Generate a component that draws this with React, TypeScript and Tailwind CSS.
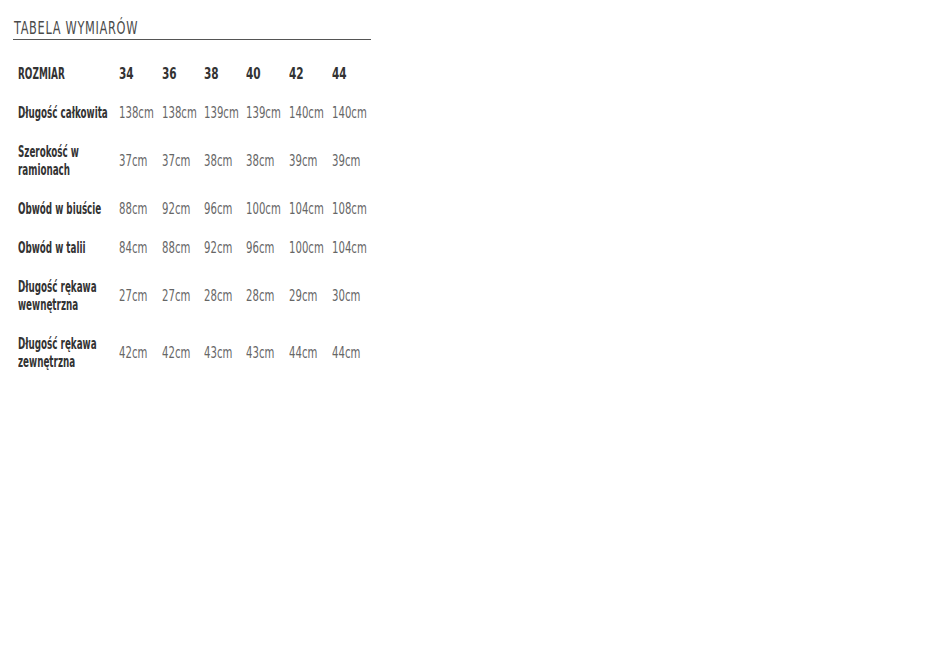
import React from "react";

const sizes = ["34", "36", "38", "40", "42", "44"];

const rows: { label: string[]; values: string[] }[] = [
  { label: ["Długość całkowita"], values: ["138cm", "138cm", "139cm", "139cm", "140cm", "140cm"] },
  { label: ["Szerokość w", "ramionach"], values: ["37cm", "37cm", "38cm", "38cm", "39cm", "39cm"] },
  { label: ["Obwód w biuście"], values: ["88cm", "92cm", "96cm", "100cm", "104cm", "108cm"] },
  { label: ["Obwód w talii"], values: ["84cm", "88cm", "92cm", "96cm", "100cm", "104cm"] },
  { label: ["Długość rękawa", "wewnętrzna"], values: ["27cm", "27cm", "28cm", "28cm", "29cm", "30cm"] },
  { label: ["Długość rękawa", "zewnętrzna"], values: ["42cm", "42cm", "43cm", "43cm", "44cm", "44cm"] },
];

// wąska czcionka: DejaVu Condensed ściśnięta w poziomie
const Narrow: React.FC<{ className: string; children: React.ReactNode }> = ({ className, children }) => (
  <span className={"inline-block origin-left whitespace-nowrap " + className}>{children}</span>
);

const App: React.FC = () => {
  return (
    <div
      className="min-h-screen bg-white pl-[13px] pt-[17px]"
      style={{ fontFamily: '"DejaVu Sans Condensed", "DejaVu Sans", sans-serif' }}
    >
      <div className="w-[358px]">
        <h2 className="border-b-[1.5px] border-[#555] pb-[1px] pl-px text-[18px] leading-[21px] font-normal tracking-[1px] text-[#4a4a4a]">
          <Narrow className="scale-x-[0.7]">TABELA WYMIARÓW</Narrow>
        </h2>

        {/* tabela */}
        <table className="mt-[14px] w-[358px] table-fixed border-collapse text-[15px] leading-[18px]">
          <colgroup>
            <col className="w-[102px]" />
            <col className="w-[43px]" />
            <col className="w-[42px]" />
            <col className="w-[42px]" />
            <col className="w-[43px]" />
            <col className="w-[43px]" />
            <col className="w-[43px]" />
          </colgroup>
          <thead>
            <tr>
              <th className="pl-[5px] pt-[11px] pb-[10px] text-left font-bold text-[#333]">
                <Narrow className="scale-x-[0.66]">ROZMIAR</Narrow>
              </th>
              {sizes.map((s) => (
                <th key={s} className="pl-[4px] pt-[11px] pb-[10px] text-left font-bold text-[#333]">
                  <Narrow className="scale-x-[0.78]">{s}</Narrow>
                </th>
              ))}
            </tr>
          </thead>
          <tbody>
            {rows.map((r, i) => (
              <tr key={i}>
                <td className="pl-[5px] pt-[11px] pb-[10px] align-middle font-bold text-[#333]">
                  {r.label.map((l, k) => (
                    <div key={k}>
                      <Narrow className="scale-x-[0.65]">{l}</Narrow>
                    </div>
                  ))}
                </td>
                {r.values.map((v, j) => (
                  <td key={j} className="pl-[4px] pt-[11px] pb-[10px] align-middle text-[#666]">
                    <Narrow className="scale-x-[0.75]">{v}</Narrow>
                  </td>
                ))}
              </tr>
            ))}
          </tbody>
        </table>
      </div>
    </div>
  );
};

export default App;
